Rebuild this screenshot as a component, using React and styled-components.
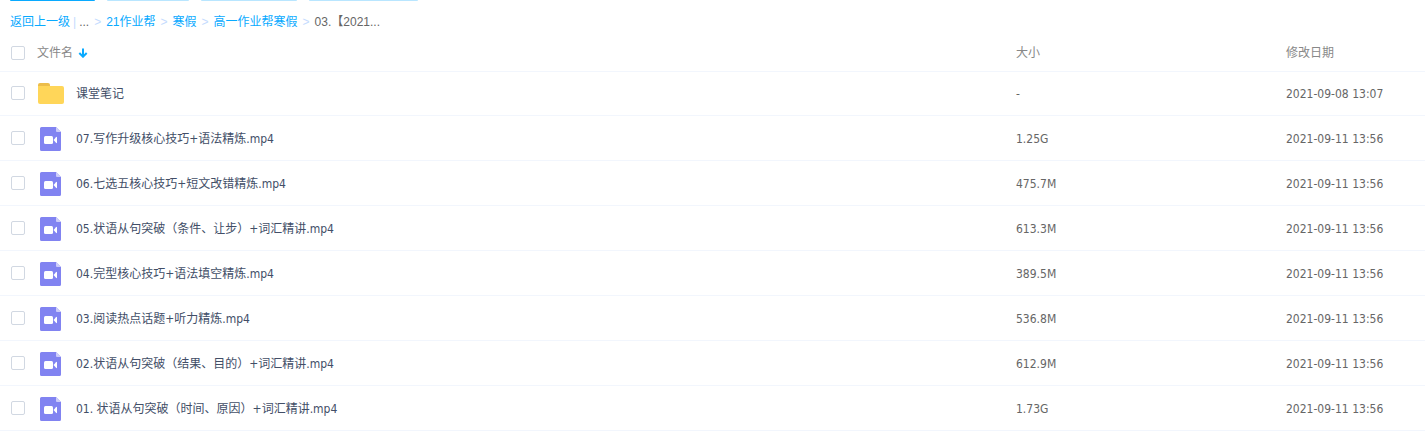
import React, { useState } from 'react';
import styled, { createGlobalStyle } from 'styled-components';

const GlobalStyle = createGlobalStyle`
	body {
		margin: 0;
		background: #fff;
		font: 12px/18px 'DejaVu Sans Condensed', 'Noto Sans CJK SC', sans-serif;
		color: #424e67;
	}
`;

const Toolbar = styled.div`
	display: flex;
	gap: 12px;
	height: 1px;
	padding: 0 10px;
`;

const ToolbarEdge = styled.div`
	width: ${props => props.$width}px;
	background: ${props => (props.$primary ? '#09aaff' : '#b9e6ff')};
	border-radius: 0 0 2px 2px;
`;

const Crumbs = styled.nav`
	display: flex;
	align-items: center;
	height: 34px;
	padding: 8px 10px 0;
	box-sizing: border-box;
	font-family: 'Liberation Sans', 'Noto Sans CJK SC', sans-serif;
	color: #666;
	white-space: pre;
`;

const CrumbLink = styled.a`
	color: #09aaff;
	text-decoration: none;
`;

const Divider = styled.span`
	margin: 0 3px;
	color: #c4dbfe;
`;

const Arrow = styled.span`
	margin: 0 5px;
	color: #c4dbfe;
`;

const Table = styled.table`
	width: 100%;
	table-layout: fixed;
	border-collapse: separate;
	border-spacing: 0;
`;

const Row = styled.tr`
	height: ${props => props.$height || 45}px;
`;

const Head = styled.th`
	width: ${props => props.$width};
	padding: 0;
	border-bottom: 1px solid #f2f6fd;
	font-weight: 400;
	text-align: left;
	color: #888;
`;

const NameBox = styled.div`
	display: flex;
	align-items: center;
	padding-left: 11px;
`;

const Check = styled.input`
	appearance: none;
	width: 14px;
	height: 14px;
	margin: 0 12px 0 0;
	border: 1px solid #d1d8e2;
	border-radius: 2px;
	background: #fff;

	&:checked {
		background: #09aaff;
		border-color: #09aaff;
	}
`;

const Cell = styled.td`
	padding: 1px 0 0;
	border-bottom: 1px solid #f2f6fd;
	color: #666;

	${Check} {
		margin-bottom: 2px;
	}
`;

const IconBox = styled.span`
	display: flex;
	justify-content: center;
	width: 26px;
	margin-right: 12px;
	margin-left: 1px;
`;

const FileLink = styled.a`
	color: #424e67;
	text-decoration: none;
`;

const SortButton = styled.button`
	display: flex;
	align-items: center;
	gap: 5px;
	padding: 0;
	border: 0;
	background: none;
	font: inherit;
	color: inherit;
`;

const FolderIcon = () => (
	<svg width="26" height="22" viewBox="0 0 26 22" aria-hidden="true">
		<path d="M0 2a2 2 0 0 1 2-2h8a2 2 0 0 1 2 2v4H0z" fill="#ecbd4b" />
		<path d="M0 3h24a2 2 0 0 1 2 2v14a2 2 0 0 1-2 2H2a2 2 0 0 1-2-2z" fill="#ffd659" />
	</svg>
);

const VideoIcon = () => (
	<svg width="22" height="24" viewBox="0 0 22 24" aria-hidden="true">
		<path d="M1.5 0H16l5 5v17.5a1.5 1.5 0 0 1-1.5 1.5h-18A1.5 1.5 0 0 1 0 22.500V1.500A1.500 1.500 0 0 1 1.500 0z" fill="#8183f1" />
		<path d="M16 0l5 5h-4a1 1 0 0 1-1-1z" fill="#cdcdfa" />
		<rect x="4" y="9" width="9" height="8" rx="1.500" fill="#fff" />
		<path d="M13.500 13L16 10.200q1-.8 1 .3v5q0 1.100-1 .3z" fill="#fff" />
	</svg>
);

const DownIcon = () => (
	<svg width="10" height="10" viewBox="0 0 10 10" aria-hidden="true">
		<path d="M5 0.500v8M1.300 5L5 8.700 8.700 5" fill="none" stroke="#09aaff" strokeWidth="2" />
	</svg>
);

const buttons = [85, 82, 96, 109];

const files = [
	{ name: '课堂笔记', size: '-', date: '2021-09-08 13:07', folder: true },
	{ name: '07.写作升级核心技巧+语法精炼.mp4', size: '1.25G', date: '2021-09-11 13:56' },
	{ name: '06.七选五核心技巧+短文改错精炼.mp4', size: '475.7M', date: '2021-09-11 13:56' },
	{ name: '05.状语从句突破（条件、让步）+词汇精讲.mp4', size: '613.3M', date: '2021-09-11 13:56' },
	{ name: '04.完型核心技巧+语法填空精炼.mp4', size: '389.5M', date: '2021-09-11 13:56' },
	{ name: '03.阅读热点话题+听力精炼.mp4', size: '536.8M', date: '2021-09-11 13:56' },
	{ name: '02.状语从句突破（结果、目的）+词汇精讲.mp4', size: '612.9M', date: '2021-09-11 13:56' },
	{ name: '01. 状语从句突破（时间、原因）+词汇精讲.mp4', size: '1.73G', date: '2021-09-11 13:56' },
];

const App = () => {
	const [selected, setSelected] = useState([]);

	const toggle = name =>
		setSelected(
			selected.includes(name) ? selected.filter(item => item !== name) : [...selected, name]
		);
	const toggleAll = e => setSelected(e.target.checked ? files.map(file => file.name) : []);

	return (
		<>
			<GlobalStyle />
			<Toolbar>
				{buttons.map((width, i) => (
					<ToolbarEdge key={width} $width={width} $primary={i === 0} />
				))}
			</Toolbar>
			<Crumbs>
				<CrumbLink href="#up">返回上一级</CrumbLink>
				<Divider>|</Divider>
				<span>...</span>
				<Arrow>&gt;</Arrow>
				<CrumbLink href="#21">21作业帮</CrumbLink>
				<Arrow>&gt;</Arrow>
				<CrumbLink href="#winter">寒假</CrumbLink>
				<Arrow>&gt;</Arrow>
				<CrumbLink href="#grade">高一作业帮寒假</CrumbLink>
				<Arrow>&gt;</Arrow>
				<span>03.【2021...</span>
			</Crumbs>
			<Table>
				<thead>
					<Row $height={37}>
						<Head>
							<NameBox>
								<Check
									type="checkbox"
									aria-label="全选"
									checked={selected.length === files.length}
									onChange={toggleAll}
								/>
								<SortButton type="button">
									文件名
									<DownIcon />
								</SortButton>
							</NameBox>
						</Head>
						<Head $width="270px">大小</Head>
						<Head $width="139px">修改日期</Head>
					</Row>
				</thead>
				<tbody>
					{files.map(file => (
						<Row key={file.name} $height={file.folder ? 44 : 45}>
							<Cell>
								<NameBox>
									<Check
										type="checkbox"
										aria-label={file.name}
										checked={selected.includes(file.name)}
										onChange={() => toggle(file.name)}
									/>
									<IconBox>{file.folder ? <FolderIcon /> : <VideoIcon />}</IconBox>
									<FileLink href="#file">{file.name}</FileLink>
								</NameBox>
							</Cell>
							<Cell>{file.size}</Cell>
							<Cell>{file.date}</Cell>
						</Row>
					))}
				</tbody>
			</Table>
		</>
	);
};

export default App;
